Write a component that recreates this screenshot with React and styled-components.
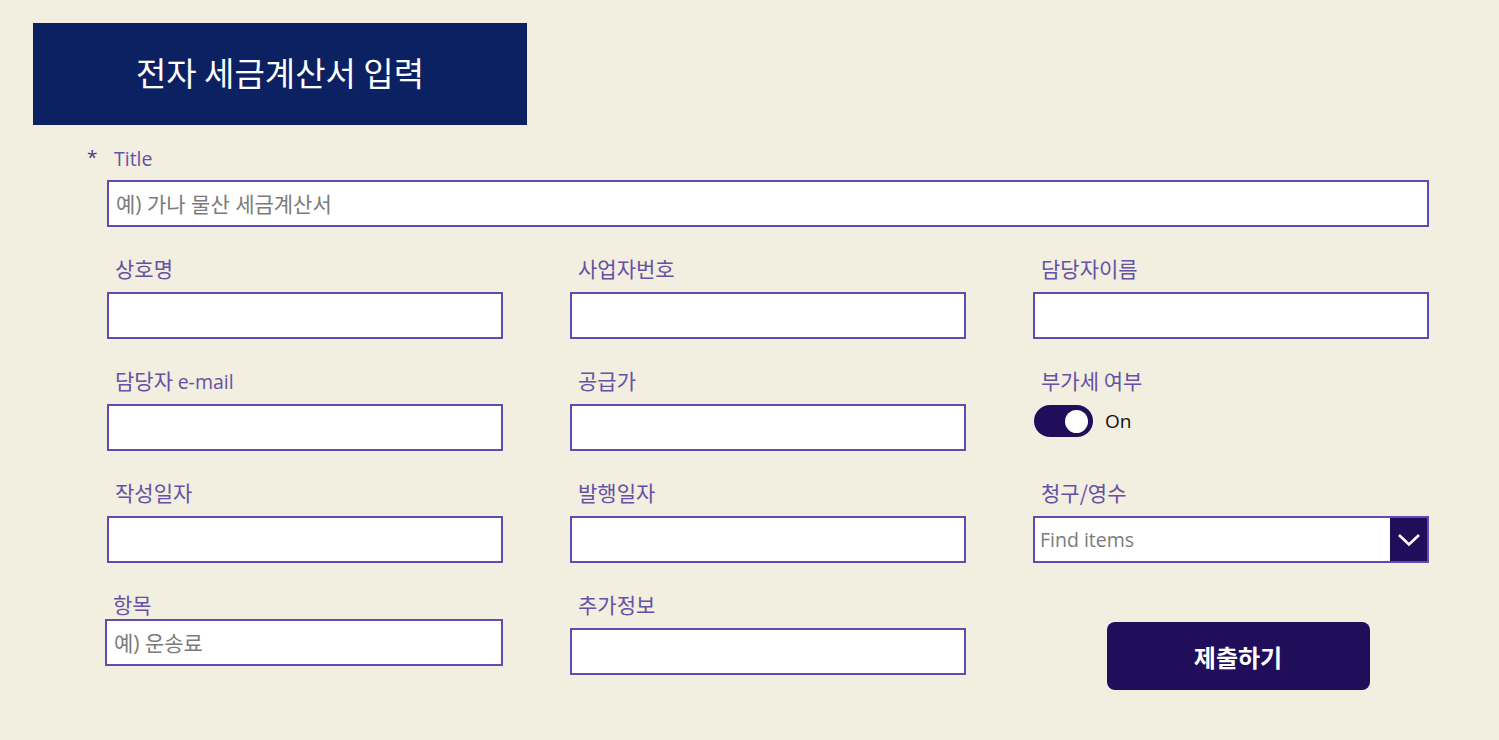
import React from "react";
import styled, { createGlobalStyle } from "styled-components";

const Global = createGlobalStyle`
  html, body { margin: 0; padding: 0; background: #f2eee0; }
  body { font-family: "Open Sans", "Noto Sans CJK KR", sans-serif; }
  * { box-sizing: border-box; }
`;

const Page = styled.div`
  width: 1499px;
  height: 740px;
  background: #f2eee0;
  padding: 23px 0 0 33px;
  overflow: hidden;
`;

const Header = styled.div`
  width: 494px;
  height: 102px;
  background: #0b2161;
  color: #fff;
  display: flex;
  align-items: center;
  justify-content: center;
  font-family: "Noto Sans CJK KR", sans-serif;
  font-size: 33px;
  padding-bottom: 4px;
`;

const Form = styled.div`
  margin: 20px 0 0 74px;
  width: 1322px;
  display: flex;
  flex-direction: column;
  gap: 29px;
`;

const Grid = styled.div`
  display: grid;
  grid-template-columns: repeat(3, 396px);
  column-gap: 67px;
  row-gap: 29px;
  align-items: start;
`;

const Field = styled.div`
  display: flex;
  flex-direction: column;
  margin-left: ${(p) => p.$shift || 0}px;
`;

const LabelRow = styled.div`
  height: 24px;
  display: flex;
  align-items: center;
  position: relative;
  margin-bottom: ${(p) => (p.$gap !== undefined ? p.$gap : 12)}px;
`;

const Label = styled.span`
  font-family: "Noto Sans CJK KR", sans-serif;
  font-size: 21px;
  color: #6551a6;
  padding-left: ${(p) => p.$indent || 8}px;
  white-space: nowrap;
`;

const Latin = styled.span`
  font-family: "Open Sans", sans-serif;
  font-size: 19.5px;
`;

const Star = styled.span`
  position: absolute;
  left: -20px;
  top: -1px;
  font-size: 19px;
  color: #4a3d8a;
  font-family: "Open Sans", sans-serif;
`;

const Input = styled.input`
  width: 100%;
  height: 47px;
  border: 2px solid #5e4cb0;
  background: #fff;
  padding: 0 7px;
  font-family: "Open Sans", "Noto Sans CJK KR", sans-serif;
  font-size: 21px;
  color: #333;
  outline: none;
  &::placeholder { color: #7b7b7b; }
`;

const ToggleRow = styled.div`
  display: flex;
  align-items: center;
  gap: 12px;
  height: 32px;
  margin-top: 1px;
  padding-left: 1px;
`;

const Track = styled.div`
  width: 59px;
  height: 32px;
  border-radius: 16px;
  background: #200e5b;
  display: flex;
  align-items: center;
  justify-content: flex-end;
  padding-right: 5px;
`;

const Knob = styled.div`
  width: 23px;
  height: 23px;
  border-radius: 50%;
  background: #fff;
`;

const ToggleText = styled.span`
  font-family: "Open Sans", sans-serif;
  font-size: 19px;
  color: #111;
`;

const Select = styled.div`
  height: 47px;
  border: 2px solid #5e4cb0;
  background: #fff;
  display: flex;
  align-items: stretch;
`;

const SelectText = styled.span`
  flex: 1;
  display: flex;
  align-items: center;
  padding-left: 5px;
  font-family: "Open Sans", sans-serif;
  font-size: 19.5px;
  color: #7b7b7b;
`;

const Chevron = styled.div`
  width: 37px;
  background: #200e5b;
  display: flex;
  align-items: center;
  justify-content: center;
`;

const ButtonCell = styled.div`
  display: flex;
  justify-content: center;
  padding: 30px 0 0 14px;
`;

const Submit = styled.button`
  width: 263px;
  height: 68px;
  border: none;
  border-radius: 8px;
  background: #200e5b;
  color: #fff;
  font-family: "Noto Sans CJK KR", sans-serif;
  font-weight: 700;
  font-size: 24px;
  cursor: pointer;
`;

function TextField({ label, placeholder, gap, shift }) {
  return (
    <Field $shift={shift}>
      <LabelRow $gap={gap}>
        <Label>{label}</Label>
      </LabelRow>
      <Input placeholder={placeholder} />
    </Field>
  );
}

export default function App() {
  return (
    <>
      <Global />
      <Page>
        <Header>전자 세금계산서 입력</Header>
        <Form>
          <Field>
            <LabelRow $gap={11}>
              <Star>*</Star>
              <Label $indent={7}>
                <Latin>Title</Latin>
              </Label>
            </LabelRow>
            <Input placeholder="예) 가나 물산 세금계산서" />
          </Field>
          <Grid>
            <TextField label="상호명" />
            <TextField label="사업자번호" />
            <TextField label="담당자이름" />

            <TextField
              label={
                <>
                  담당자 <Latin>e-mail</Latin>
                </>
              }
            />
            <TextField label="공급가" />
            <Field>
              <LabelRow>
                <Label>부가세 여부</Label>
              </LabelRow>
              <ToggleRow>
                <Track>
                  <Knob />
                </Track>
                <ToggleText>On</ToggleText>
              </ToggleRow>
            </Field>

            <TextField label="작성일자" />
            <TextField label="발행일자" />
            <Field>
              <LabelRow>
                <Label>청구/영수</Label>
              </LabelRow>
              <Select>
                <SelectText>Find items</SelectText>
                <Chevron>
                  <svg width="24" height="14" viewBox="0 0 24 14">
                    <path d="M2 2 L12 11.5 L22 2" fill="none" stroke="#fff" strokeWidth="2.6" />
                  </svg>
                </Chevron>
              </Select>
            </Field>

            <TextField label="항목" placeholder="예) 운송료" gap={3} shift={-2} />
            <TextField label="추가정보" />
            <ButtonCell>
              <Submit>제출하기</Submit>
            </ButtonCell>
          </Grid>
        </Form>
      </Page>
    </>
  );
}
